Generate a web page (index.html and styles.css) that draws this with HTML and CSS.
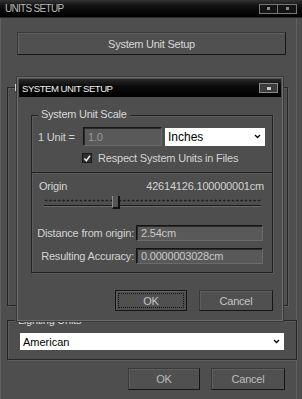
FILE: index.html
```html
<!DOCTYPE html>
<html>
<head>
<meta charset="utf-8">
<link rel="stylesheet" href="styles.css">
</head>
<body>
<div class="window">
  <div class="titlebar">
    <span class="title">UNITS SETUP</span>
    <div class="tb-btns"><span class="tb-btn"><i></i></span><span class="tb-btn"><i></i></span></div>
  </div>
  <div class="body">
    <button class="btn wide">System Unit Setup</button>
    <div class="group display">
      <span class="bracket"></span>
      <div class="peek p1"></div>
      <div class="peek p2"></div>
      <div class="peek p3"></div>
    </div>
    <div class="group lighting">
      <span class="glabel">Lighting Units</span>
      <div class="select light-sel"><span>American</span><svg width="7" height="5" viewBox="0 0 7 5"><path d="M1 1 L3.5 3.5 L6 1" fill="none" stroke="#000" stroke-width="1.3"/></svg></div>
    </div>
    <div class="actions">
      <button class="btn ok">OK</button>
      <button class="btn cancel">Cancel</button>
    </div>
  </div>

  <div class="modal">
    <div class="m-titlebar">
      <span class="m-title">SYSTEM UNIT SETUP</span>
      <span class="tb-btn close"><i></i></span>
    </div>
    <div class="m-body">
      <div class="mgroup">
        <span class="glabel sus">System Unit Scale</span>
        <div class="scale">
          <div class="row unit-row">
            <span class="unit-label">1 Unit =</span>
            <div class="input unit-in">1.0</div>
            <div class="select inch-sel"><span>Inches</span><svg width="7" height="5" viewBox="0 0 7 5"><path d="M1 1 L3.5 3.5 L6 1" fill="none" stroke="#000" stroke-width="1.3"/></svg></div>
          </div>
          <div class="row check-row">
            <span class="checkbox"><svg width="9" height="9" viewBox="0 0 9 9"><path d="M1.5 4.5 L3.8 7 L7.8 1.5" fill="none" stroke="#e8e8e8" stroke-width="1.8"/></svg></span>
            <span>Respect System Units in Files</span>
          </div>
        </div>
        <div class="origin">
          <div class="row origin-row">
            <span>Origin</span>
            <span>42614126.100000001cm</span>
          </div>
          <div class="slider">
            <div class="ticks"></div>
            <div class="track"></div>
            <div class="thumb"></div>
          </div>
          <div class="row field-row">
            <span class="flabel">Distance from origin:</span>
            <div class="input field">2.54cm</div>
          </div>
          <div class="row field-row">
            <span class="flabel">Resulting Accuracy:</span>
            <div class="input field">0.0000003028cm</div>
          </div>
        </div>
      </div>
      <div class="m-actions">
        <button class="btn m-ok"><span class="focus">OK</span></button>
        <button class="btn m-cancel">Cancel</button>
      </div>
    </div>
  </div>
</div>
</body>
</html>
```

FILE: styles.css
```css
html, body {
  margin: 0;
  padding: 0;
  background: #4e4e4e;
}

.window {
  position: relative;
  width: 302px;
  height: 399px;
  overflow: hidden;
  background: #4e4e4e;
  font-family: "Liberation Sans", Arial, sans-serif;
  font-size: 11px;
  letter-spacing: -0.2px;
  color: #d2d2d2;
  box-sizing: border-box;
}

.titlebar {
  height: 18px;
  box-sizing: border-box;
  background: linear-gradient(#333 0%, #111 35%, #000 100%);
  display: flex;
  align-items: center;
  justify-content: space-between;
  padding: 0 5px 0 5px;
  border-bottom: 1px solid #2a2a2a;
}

.title {
  color: #b8b8b8;
  font-size: 10px;
  letter-spacing: -0.7px;
}

.tb-btns {
  display: flex;
}

.tb-btn {
  width: 19px;
  height: 10px;
  box-sizing: border-box;
  border: 1px solid #777;
  display: flex;
  align-items: center;
  justify-content: center;
  background: #141414;
}

.tb-btn + .tb-btn {
  border-left: none;
}

.tb-btn i {
  width: 3px;
  height: 3px;
  background: #8a8a8a;
  display: block;
}

.body {
  display: flex;
  flex-direction: column;
  padding-top: 14px;
  height: 381px;
  box-sizing: border-box;
  border-left: 1px solid #606060;
  border-right: 1px solid #606060;
  margin-right: 5px;
}

.btn {
  font-family: inherit;
  font-size: 11px;
  letter-spacing: -0.2px;
  color: #d8d8d8;
  background: #505050;
  border: 1px solid;
  border-color: #3a3a3a #161616 #161616 #3a3a3a;
  box-shadow: inset 1px 1px 0 #5e5e5e;
  padding: 0;
  margin: 0;
  display: flex;
  align-items: center;
  justify-content: center;
  box-sizing: border-box;
}

.wide {
  margin-left: 16px;
  width: 269px;
  height: 23px;
  font-size: 11px;
  letter-spacing: -0.25px;
}

.group {
  position: relative;
  box-sizing: border-box;
  border: 1px solid #262626;
  box-shadow: inset 1px 1px 0 #5c5c5c, 1px 1px 0 #5c5c5c;
}

.glabel {
  position: absolute;
  top: -7px;
  left: 7px;
  padding: 0 3px;
  background: #4e4e4e;
  color: #d8d8d8;
  font-size: 11px;
  letter-spacing: -0.25px;
  line-height: 13px;
  white-space: nowrap;
}

/* visible sliver of the hidden group's caption */
.bracket {
  position: absolute;
  top: -4px;
  left: 7px;
  width: 3px;
  height: 7px;
  box-sizing: border-box;
  border: 1px solid #cfcfcf;
  border-right: none;
  background: #4e4e4e;
}

.display {
  margin-top: 32px;
  margin-left: 6px;
  width: 281px;
  height: 219px;
  display: flex;
  flex-direction: column;
  align-items: flex-end;
  padding-right: 3px;
}

.peek {
  width: 60px;
  background: #f2f2f2;
}

.p1 { margin-top: 34px; height: 18px; }
.p2 { margin-top: 38px; height: 17px; }
.p3 { margin-top: 55px; height: 20px; }

.lighting {
  margin-top: 14px;
  margin-left: 6px;
  width: 290px;
  height: 40px;
  padding: 12px 0 0 12px;
}

.select {
  background: #fff;
  color: #000;
  display: flex;
  align-items: center;
  justify-content: space-between;
  box-sizing: border-box;
  font-size: 11px;
  letter-spacing: 0;
  padding: 0 4px 0 3px;
}

.light-sel {
  width: 264px;
  height: 17px;
}

.actions {
  display: flex;
  justify-content: flex-end;
  gap: 11px;
  margin-top: 8px;
  padding-right: 11px;
}

.actions .btn {
  height: 22px;
  color: #bcbcbc;
}

.ok { width: 72px; }
.cancel { width: 74px; }

/* modal dialog lying over the units setup window */
.modal {
  position: absolute;
  left: 17px;
  top: 77px;
  width: 266px;
  height: 244px;
  box-sizing: border-box;
  border: 1px solid #6c6c6c;
  padding: 1px;
  background: #4e4e4e;
  box-shadow: 0 0 0 1px #3a3a3a;
  display: flex;
  flex-direction: column;
}

.m-titlebar {
  height: 18px;
  flex: none;
  background: linear-gradient(#2a2a2a 0%, #0b0b0b 40%, #000 100%);
  display: flex;
  align-items: center;
  justify-content: space-between;
  padding: 0 3px 0 3px;
  box-sizing: border-box;
}

.m-title {
  color: #f0f0f0;
  font-size: 9.6px;
  letter-spacing: -0.5px;
}

.close {
  width: 19px;
  height: 10px;
  background: #3c3c3c;
  border-color: #8a8a8a;
}

.close i {
  width: 4px;
  height: 3px;
  background: #cfcfcf;
}

.m-body {
  flex: 1;
  display: flex;
  flex-direction: column;
  padding-top: 18px;
}

.mgroup {
  position: relative;
  margin-left: 12px;
  margin-right: 8px;
  height: 158px;
  box-sizing: border-box;
  border: 1px solid #222;
  box-shadow: inset 1px 1px 0 #5c5c5c, 1px 1px 0 #5c5c5c;
  display: flex;
  flex-direction: column;
}

.sus {
  left: 6px;
  top: -8px;
}

.scale {
  height: 57px;
  box-sizing: border-box;
  border-bottom: 1px solid #222;
  box-shadow: 0 1px 0 #5c5c5c;
  padding: 11px 0 0 6px;
}

.row {
  display: flex;
  align-items: center;
}

.unit-label {
  width: 45px;
}

.input {
  background: #595959;
  border: 1px solid;
  border-color: #151515 #6a6a6a #6a6a6a #151515;
  box-shadow: inset 1px 1px 0 #2a2a2a;
  box-sizing: border-box;
  color: #c8c8c8;
  display: flex;
  align-items: center;
  padding-left: 4px;
}

.unit-in {
  width: 79px;
  height: 19px;
  color: #9a9a9a;
}

.inch-sel {
  margin-left: 3px;
  width: 100px;
  height: 18px;
  font-size: 12px;
}

.check-row {
  margin-top: 6px;
  margin-left: 44px;
  gap: 6px;
}

.checkbox {
  width: 10px;
  height: 10px;
  background: #2e2e2e;
  border: 1px solid #1a1a1a;
  box-sizing: border-box;
  display: flex;
  align-items: center;
  justify-content: center;
}

.origin {
  padding: 6px 8px 0 3px;
  display: flex;
  flex-direction: column;
}

.origin-row {
  justify-content: space-between;
  padding-left: 4px;
  height: 14px;
}

.slider {
  position: relative;
  height: 14px;
  margin: 3px 0 0 9px;
  width: 217px;
}

.ticks {
  height: 3px;
  margin-top: 3px;
  background-image: radial-gradient(circle, #1e1e1e 0.9px, transparent 1.1px);
  background-size: 4.35px 3px;
  background-repeat: repeat-x;
}

.track {
  height: 1px;
  margin-top: 3px;
  background: #1a1a1a;
  box-shadow: 0 1px 0 #6a6a6a;
}

.thumb {
  position: absolute;
  left: 68px;
  top: 0;
  width: 5px;
  height: 11px;
  border-right: 2px solid #111;
  border-bottom: 2px solid #111;
  border-left: 1px solid #8a8a8a;
  background: #555;
}

.field-row {
  margin-top: 15px;
  height: 16px;
}

.field-row + .field-row {
  margin-top: 7px;
}

.flabel {
  width: 101px;
  text-align: right;
  padding-right: 2px;
  box-sizing: border-box;
  white-space: nowrap;
}

.field {
  width: 127px;
  height: 16px;
}

.m-actions {
  display: flex;
  gap: 12px;
  margin-top: 17px;
  padding-left: 96px;
}

.m-actions .btn {
  height: 21px;
  color: #c4c4c4;
}

.m-ok {
  width: 72px;
  border-color: #161616;
  padding: 2px;
}

.focus {
  width: 100%;
  height: 100%;
  border: 1px dotted #111;
  box-sizing: border-box;
  display: flex;
  align-items: center;
  justify-content: center;
}

.m-cancel {
  width: 74px;
}
```
